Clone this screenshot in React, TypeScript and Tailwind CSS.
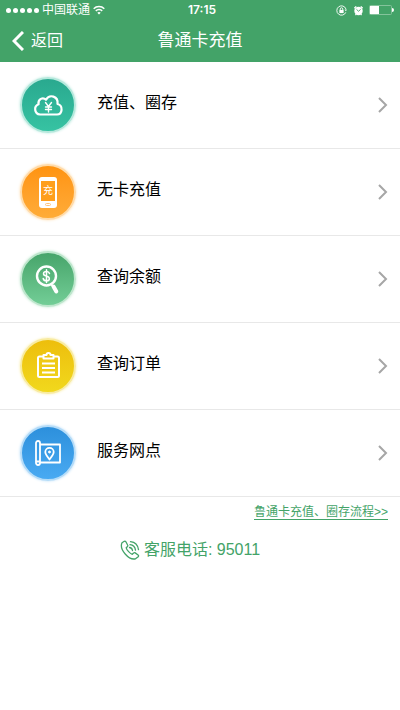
import type { ReactNode } from "react";

interface MenuItem {
  label: string;
  circle: string;
  icon: ReactNode;
}

const sans = "font-['Liberation_Sans','Noto_Sans_CJK_SC',sans-serif]";

function CloudYuanIcon() {
  return (
    <svg viewBox="0 0 32 32" className="size-8" fill="none" stroke="currentColor" strokeWidth="2.200" strokeLinecap="round" strokeLinejoin="round">
      <path d="M8 25.500a5.300 5.300 0 0 1-1.500-10.200C5.800 9.800 11 7.800 14 10.800C17.500 4.600 26.500 7.200 25.500 15C31.500 16.500 30.500 25.500 25 25.500Z" />
      <path d="M13.500 13.500l3 4 3-4M16.500 17.500v5.500M13.500 18h6M13.500 20.500h6" strokeWidth="1.400" />
    </svg>
  );
}

function PhoneCardIcon() {
  return (
    <span className="flex h-[31px] w-[18px] flex-col items-center rounded-[3px] bg-white pt-1">
      <span className="flex h-5 w-[14px] items-center justify-center bg-[#ff9f1c] text-[10px] leading-none">
        充
      </span>
      <span className="mt-[2px] h-[3px] w-[6px] rounded-full border border-[#ffc47a]" />
    </span>
  );
}

function SearchMoneyIcon() {
  return (
    <svg viewBox="0 0 32 32" className="size-8" fill="none" stroke="currentColor" strokeLinecap="round">
      <circle cx="14.500" cy="13" r="9.500" strokeWidth="2.400" />
      <path d="M19.500 21.500l1.300 2" strokeWidth="2" />
      <path d="M21.500 23.500l2.800 5" strokeWidth="4" />
      <path d="M17.500 10.500c-.4-1.400-1.500-2-3-2-3.800 0-4 3.800-.3 4.500 4.300.8 4 4.800.3 4.800-1.800 0-3-.8-3.300-2.300M14.500 6.800v12.800" strokeWidth="1.500" />
    </svg>
  );
}

function ClipboardIcon() {
  return (
    <svg viewBox="0 0 32 32" className="size-8" fill="none" stroke="currentColor" strokeWidth="2" strokeLinejoin="round">
      <path d="M11 6.500H7.500Q6 6.500 6 8v17.500Q6 27 7.500 27h18q1.500 0 1.500-1.500V8Q27 6.500 25.500 6.500H22" />
      <path d="M11.500 8.500V5h3a2 2 0 0 1 4 0h3v3.500Z" />
      <path d="M10 13.500h13M10 18h13M10 22.500h13" />
    </svg>
  );
}

function MapIcon() {
  return (
    <svg viewBox="0 0 32 32" className="size-8" fill="none" stroke="currentColor" strokeWidth="1.800" strokeLinejoin="round">
      <rect x="4" y="4" width="4" height="24" rx="2" />
      <path d="M4 24.500h4M8 7.500h20v18H8" />
      <path d="M17.500 22.500c-3-3.800-4.200-5.500-4.200-7.500a4.200 4.200 0 0 1 8.400 0c0 2-1.200 3.700-4.200 7.500Z" />
      <circle cx="17.500" cy="15" r="1" fill="currentColor" strokeWidth="1" />
    </svg>
  );
}

const menu: MenuItem[] = [
  {
    label: "充值、圈存",
    circle: "from-[#29a88e] to-[#37c4a3] border-[#b5e8dc] shadow-[0_0_3px_#b5e8dc]",
    icon: <CloudYuanIcon />,
  },
  {
    label: "无卡充值",
    circle: "from-[#ff920b] to-[#ffad38] border-[#ffdba9] shadow-[0_0_3px_#ffdba9]",
    icon: <PhoneCardIcon />,
  },
  {
    label: "查询余额",
    circle: "from-[#45a369] to-[#74cf98] border-[#bde6cc] shadow-[0_0_3px_#bde6cc]",
    icon: <SearchMoneyIcon />,
  },
  {
    label: "查询订单",
    circle: "from-[#edbd0b] to-[#f1d91d] border-[#f8eba0] shadow-[0_0_3px_#f8eba0]",
    icon: <ClipboardIcon />,
  },
  {
    label: "服务网点",
    circle: "from-[#2b8fdb] to-[#4aabf3] border-[#b5dcf8] shadow-[0_0_3px_#b5dcf8]",
    icon: <MapIcon />,
  },
];

function StatusBar() {
  return (
    <div className="grid h-5 grid-cols-[1fr_auto_1fr] items-center px-[6px] text-xs leading-5">
      <div className="flex items-center">
        <div className="flex gap-[2px]">
          {[0, 1, 2, 3, 4].map((dot) => (
            <span key={dot} className="size-[5px] rounded-full bg-white" />
          ))}
        </div>
        <span className="ml-[3px]">中国联通</span>
        <svg viewBox="0 0 12 10" className="ml-[3px] h-[10px] w-3" fill="none" stroke="currentColor" strokeWidth="1.500">
          <path d="M.7 3.700a7.500 7.500 0 0 1 10.600 0M2.800 5.900a4.500 4.500 0 0 1 6.400 0" />
          <path d="M6 9.500L4.300 7.800a2.400 2.400 0 0 1 3.400 0Z" fill="currentColor" stroke="none" />
        </svg>
      </div>
      <span className="pl-1 font-['Inter',sans-serif] font-semibold">17:15</span>
      <div className="flex items-center justify-end">
        <svg viewBox="0 0 12 12" className="mr-[6px] size-[11px]" fill="none" stroke="currentColor">
          <path d="M10.800 4.300A5.100 5.100 0 1 0 10.700 8" strokeWidth="1" />
          <path d="M9.300 4.800h2.600l-1.100 2Z" fill="currentColor" stroke="none" />
          <rect x="3.700" y="5.400" width="4.600" height="3.400" fill="currentColor" stroke="none" />
          <path d="M4.600 5.500V4.400a1.400 1.400 0 0 1 2.800 0v1.100" />
        </svg>
        <svg viewBox="0 0 12 12" className="mr-[5px] size-[11px]" fill="currentColor">
          <circle cx="6" cy="6.500" r="4.600" />
          <path d="M1.500 3.500L3.500 1.500M8.500 1.500L10.500 3.500M3.500 10l-.8 1M8.500 10l.8 1" stroke="currentColor" strokeWidth="1.400" />
          <path d="M3.800 4.700L6 6.800l2.300-2" fill="none" stroke="#43a368" strokeWidth="1" />
        </svg>
        <svg viewBox="0 0 25 10" className="h-[10px] w-[25px]">
          <rect x=".5" y=".5" width="22" height="9" rx="1" fill="none" stroke="#84c39b" />
          <rect x="1" y="1" width="9" height="8" fill="white" />
          <path d="M23 3q2 0 2 2t-2 2Z" fill="white" />
        </svg>
      </div>
    </div>
  );
}

export default function App() {
  return (
    <div className={`min-h-screen bg-white text-black ${sans}`}>
      <header className="h-[62px] bg-[#43a368] text-white">
        <StatusBar />
        <div className="grid h-[42px] grid-cols-[1fr_auto_1fr] items-center px-3">
          <button type="button" className="flex items-center gap-[7px] text-base leading-6">
            <svg viewBox="0 0 12 20" className="h-5 w-3" fill="none" stroke="currentColor" strokeWidth="3">
              <path d="M11 1L2 10l9 9" />
            </svg>
            返回
          </button>
          <h1 className="text-[17px] leading-6 font-normal">鲁通卡充值</h1>
        </div>
      </header>

      <main>
        <ul>
          {menu.map((item) => (
            <li key={item.label} className="border-b border-[#e8e8e8]">
              <button type="button" className="flex h-[86px] w-full items-center pr-3 pl-5 text-left">
                <span
                  className={`flex size-14 items-center justify-center rounded-full border-2 bg-linear-to-b bg-origin-border text-white ${item.circle}`}
                >
                  {item.icon}
                </span>
                <span className="ml-[21px] flex-1 pb-1 text-base leading-6">{item.label}</span>
                <svg viewBox="0 0 10 16" className="h-4 w-[10px]" fill="none" stroke="#a6a6a6" strokeWidth="2">
                  <path d="M1 1l7 7-7 7" />
                </svg>
              </button>
            </li>
          ))}
        </ul>

        <div className="flex justify-end px-3 pt-2">
          <a href="#process" className="border-b border-[#43a368] text-xs leading-[14px] text-[#43a368]">
            鲁通卡充值、圈存流程&gt;&gt;
          </a>
        </div>

        <a
          href="tel:95011"
          className="mx-auto mt-[18px] flex w-fit items-center gap-1 pr-5 text-base leading-6 text-[#43a368]"
        >
          <svg viewBox="0 0 20 20" className="size-5" fill="none" stroke="currentColor" strokeWidth="1.300" strokeLinecap="round" strokeLinejoin="round">
            <path d="M4.300 1.300L2 2.800C-1 9.500 9 20.500 15.500 18.800l2.700-2.100q.8-.9-.1-1.700l-2.900-2.100q-.9-.5-1.600.2l-1.300 1.200C10 13.500 6.800 10 6.200 7.800l1.300-1.300q.6-.7.1-1.500L5.900 1.800q-.6-.9-1.600-.5Z" />
            <path d="M9.500 7.500q2.500.3 3 3M10 4.700q4.800.5 5.500 5.500M10.500 1.700q7 .8 8 8" />
          </svg>
          <span>客服电话: 95011</span>
        </a>
      </main>
    </div>
  );
}
